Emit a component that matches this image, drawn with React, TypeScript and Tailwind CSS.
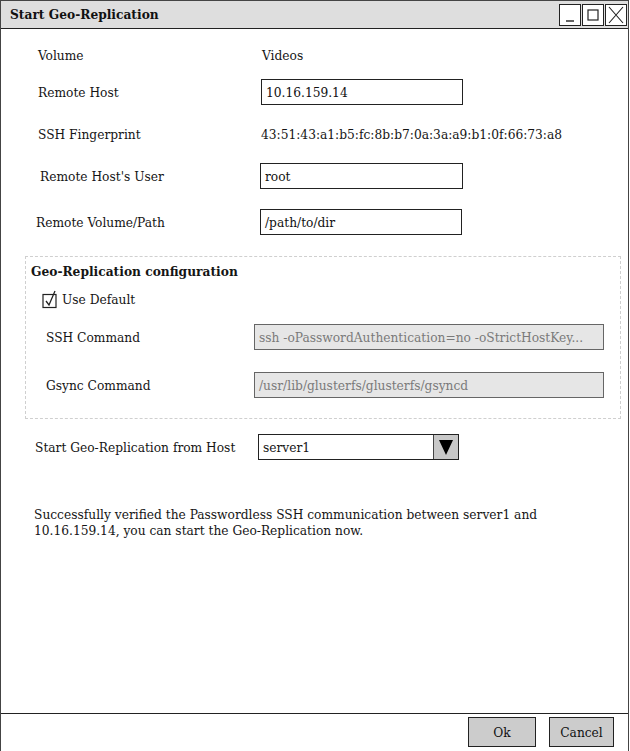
import React from "react";

const font = "font-['DejaVu_Serif_Condensed','DejaVu_Serif',serif] font-stretch-condensed";

function TextBox({ value, className = "" }: { value: string; className?: string }) {
  return (
    <div className={`h-[26px] border border-[#222] bg-white flex items-center px-[4px] text-[13.6px] text-[#111] ${className}`}>
      {value}
    </div>
  );
}

function DisabledBox({ value }: { value: string }) {
  return (
    <div className="ml-auto h-[26px] w-[350px] border border-[#666] bg-[#e6e6e6] flex items-center px-[4px] text-[13.6px] text-[#7a7a7a] whitespace-nowrap overflow-hidden">
      {value}
    </div>
  );
}

function WinButton({ children }: { children: React.ReactNode }) {
  return (
    <div className="w-[22px] h-[22px] border border-[#222] bg-white flex items-center justify-center">
      {children}
    </div>
  );
}

export default function App() {
  return (
    <div className={`w-[630px] h-[751px] overflow-hidden bg-white ${font}`}>
      <div className="w-[629px] h-[760px] border border-[#444] flex flex-col">
        {/* title bar */}
        <div className="h-[28px] bg-[#dedede] border-b border-[#222] flex items-center justify-between pl-[9px] pr-[1px]">
          <span className="text-[13.6px] font-bold text-[#111]">Start Geo-Replication</span>
          <div className="flex gap-[1px]">
            <WinButton>
              <svg width="14" height="16" viewBox="0 0 14 16">
                <path d="M3 14 H11" stroke="#222" strokeWidth="1.4" />
              </svg>
            </WinButton>
            <WinButton>
              <svg width="14" height="14" viewBox="0 0 14 14">
                <rect x="2" y="2" width="10" height="10" fill="none" stroke="#222" strokeWidth="1.2" />
              </svg>
            </WinButton>
            <WinButton>
              <svg width="18" height="18" viewBox="0 0 18 18">
                <path d="M2 1 L16 17 M16 1 L2 17" stroke="#222" strokeWidth="1.1" />
              </svg>
            </WinButton>
          </div>
        </div>

        {/* body */}
        <div className="flex-1 flex flex-col text-[13.6px] text-[#151515]">
          <div className="mt-[13px] h-[26px] flex items-center">
            <span className="w-[261px] pl-[37px]">Volume</span>
            <span>Videos</span>
          </div>
          <div className="mt-[11px] h-[26px] flex items-center">
            <span className="w-[260px] pl-[37px]">Remote Host</span>
            <TextBox value="10.16.159.14" className="w-[202px]" />
          </div>
          <div className="mt-[16px] h-[26px] flex items-center">
            <span className="w-[260px] pl-[37px]">SSH Fingerprint</span>
            <span>43:51:43:a1:b5:fc:8b:b7:0a:3a:a9:b1:0f:66:73:a8</span>
          </div>
          <div className="mt-[16px] h-[26px] flex items-center">
            <span className="w-[259px] pl-[39px]">Remote Host's User</span>
            <TextBox value="root" className="w-[203px]" />
          </div>
          <div className="mt-[20px] h-[26px] flex items-center">
            <span className="w-[259px] pl-[35px]">Remote Volume/Path</span>
            <TextBox value="/path/to/dir" className="w-[202px]" />
          </div>

          {/* group */}
          <div className="mt-[21px] ml-[24px] w-[596px] h-[163px] border border-dashed border-[#cfcfcf] flex flex-col pl-[5px] pr-[16px]">
            <div className="mt-[4px] font-bold">Geo-Replication configuration</div>
            <div className="mt-[8px] ml-[11px] flex items-center gap-[4px]">
              <svg width="16" height="19" viewBox="0 0 16 19">
                <rect x="1" y="4.5" width="13" height="13" fill="white" stroke="#222" strokeWidth="1.2" />
                <path d="M4 11 L7 15 L13 1" fill="none" stroke="#222" strokeWidth="1.3" />
              </svg>
              <span>Use Default</span>
            </div>
            <div className="mt-[14px] h-[26px] flex items-center">
              <span className="pl-[15px]">SSH Command</span>
              <DisabledBox value="ssh -oPasswordAuthentication=no -oStrictHostKey..." />
            </div>
            <div className="mt-[22px] h-[26px] flex items-center">
              <span className="pl-[15px]">Gsync Command</span>
              <DisabledBox value="/usr/lib/glusterfs/glusterfs/gsyncd" />
            </div>
          </div>

          <div className="mt-[15px] h-[26px] flex items-center">
            <span className="w-[257px] pl-[34px]">Start Geo-Replication from Host</span>
            <div className="w-[201px] h-[26px] border border-[#222] flex">
              <div className="flex-1 flex items-center px-[4px]">server1</div>
              <div className="w-[25px] bg-[#c8c8c8] border-l border-[#444] flex items-center justify-center">
                <svg width="16" height="18" viewBox="0 0 16 18">
                  <path d="M1 2 H15 L8 17 Z" fill="#000" />
                </svg>
              </div>
            </div>
          </div>

          <p className="mt-[46px] pl-[33px] pr-[80px] leading-[16px]">
            Successfully verified the Passwordless SSH communication between server1 and 10.16.159.14, you can start the Geo-Replication now.
          </p>

          <div className="flex-1" />
        </div>

        {/* footer */}
        <div className="h-[46px] border-t border-[#222] flex justify-end items-start gap-[13px] pr-[14px] pt-[3px] text-[13.6px] text-[#111]">
          <button className="w-[68px] h-[30px] bg-[#cccccc] border border-[#222]">Ok</button>
          <button className="w-[65px] h-[30px] bg-[#cccccc] border border-[#222]">Cancel</button>
        </div>
      </div>
    </div>
  );
}
